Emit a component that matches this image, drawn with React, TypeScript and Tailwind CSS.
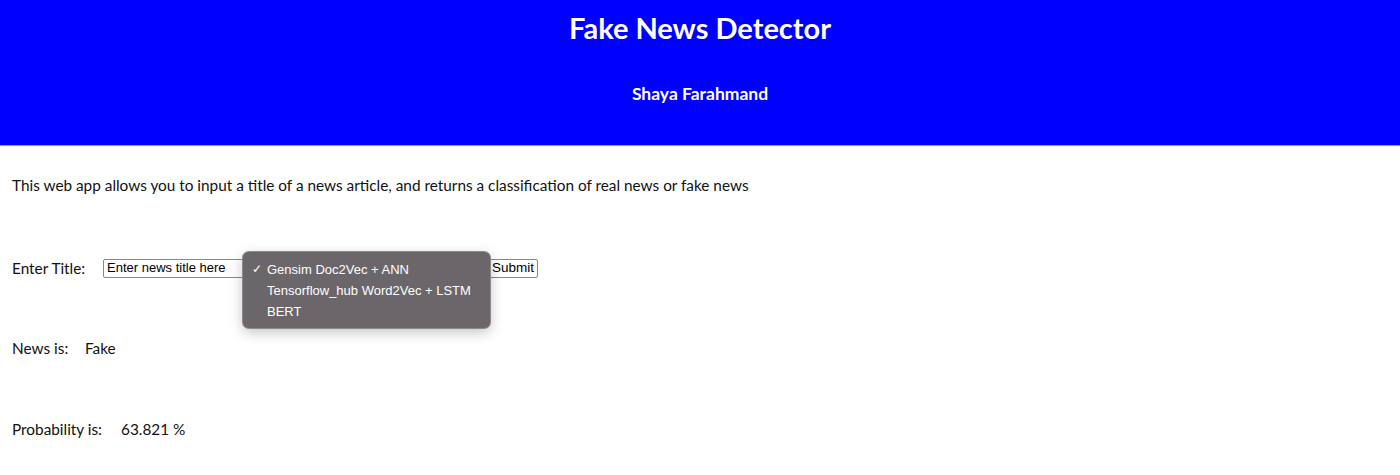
import React from 'react'

const models = ['Gensim Doc2Vec + ANN', 'Tensorflow_hub Word2Vec + LSTM', 'BERT']

export default function App() {
  return (
    <div className="min-h-[475px] bg-white text-[#111] font-['Lato','Open_Sans',sans-serif]">
      {/* Header */}
      <header className="h-[146px] bg-[#0000ff] border-b border-[#8c8cff] flex flex-col items-center text-white">
        <h1 className="mt-[10px] text-[29px] leading-[35px] font-bold">Fake News Detector</h1>
        <h2 className="mt-[38px] text-[17.5px] leading-[22px] font-bold">Shaya Farahmand</h2>
      </header>

      <main className="px-3">
        <p className="mt-[29px] text-[15.35px] leading-[20px]">
          This web app allows you to input a title of a news article, and returns a classification of real news or fake news
        </p>

        {/* Form row */}
        <div className="relative mt-[63px] flex items-center h-[20px] text-[15.35px]">
          <span className="w-[91px]">Enter Title:</span>
          <input
            readOnly
            value="Enter news title here"
            className="w-[150px] h-[19px] px-[3px] border border-[#888] rounded-[2px] font-['Liberation_Sans',Arial,sans-serif] text-[13px] text-black outline-none"
          />
          <div className="w-[235px] h-[19px]" />
          <button className="h-[19px] px-[3px] border border-[#888] rounded-[2px] bg-white font-['Liberation_Sans',Arial,sans-serif] text-[13.5px] leading-none text-black">
            Submit
          </button>

          {/* Native select popup */}
          <div className="absolute left-[231px] top-[-6px] w-[247px] h-[76px] rounded-[6px] bg-[#6b6669] shadow-[0_4px_14px_rgba(0,0,0,0.25)] ring-1 ring-[#8e8a8c] pt-[7px] font-['Liberation_Sans',Arial,sans-serif] text-[13px] text-white">
            {models.map((m, i) => (
              <div key={m} className="flex items-center h-[21px] leading-[21px]">
                <span className="w-[24px] pl-[9px] text-[12px]">{i === 0 ? '✓' : ''}</span>
                <span>{m}</span>
              </div>
            ))}
          </div>
        </div>

        <div className="mt-[60px] flex text-[15.35px] leading-[20px]">
          <span className="w-[73px]">News is:</span>
          <span>Fake</span>
        </div>

        <div className="mt-[61px] flex text-[15.35px] leading-[20px]">
          <span className="w-[109px]">Probability is:</span>
          <span>63.821 %</span>
        </div>
      </main>
    </div>
  )
}
